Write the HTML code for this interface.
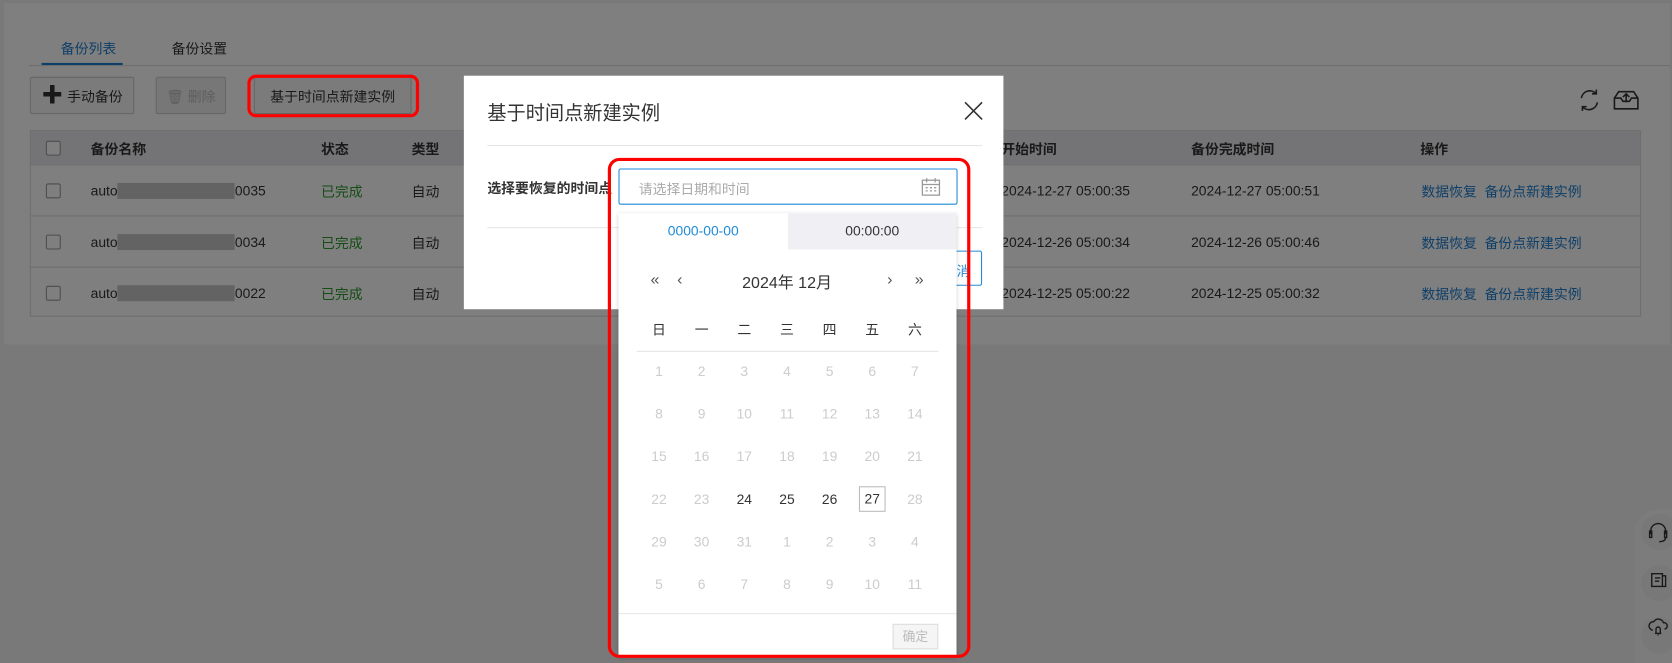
<!DOCTYPE html>
<html><head><meta charset="utf-8"><style>
*{box-sizing:border-box;margin:0;padding:0}
html,body{width:1672px;height:662px;overflow:hidden;background:#797979}
#w{position:absolute;left:0;top:0;width:1568px;height:622px;transform:scale(1.06633);transform-origin:0 0;font-family:"Liberation Sans","Noto Sans CJK SC",sans-serif;font-size:13px;color:#333;background:#f2f2f2;overflow:hidden}
.abs{position:absolute}
.card{left:4px;top:3px;width:1562px;height:320px;background:#fff}
.btn{position:absolute;top:72px;height:35px;border:1px solid #ccc;background:#f7f7f7;display:flex;align-items:center;justify-content:center;font-size:13px;border-radius:2px;white-space:nowrap}
.tbl{left:28px;top:122px;width:1511px;height:175px;border:1px solid #ddd}
.hd{position:absolute;left:0;top:0;width:100%;height:31px;background:#e8e8ec;font-weight:bold}
.row{position:absolute;left:0;width:100%;height:48px;border-top:1px solid #ddd}
.cell{position:absolute;top:50%;transform:translateY(-50%);white-space:nowrap}
.cb{position:absolute;left:14px;width:14px;height:14px;border:1px solid #999;background:#fff;border-radius:2px;top:50%;transform:translateY(-50%)}
.lnk{color:#1f7fd0}
.ov{left:0;top:0;width:1568px;height:622px;background:rgba(0,0,0,.5)}
.modal{left:435px;top:71px;width:506px;height:219px;background:#fff}
.dd{left:580px;top:200px;width:317px;height:416px;background:#fff;box-shadow:0 1px 4px rgba(0,0,0,.2)}
.d{position:absolute;width:40px;text-align:center;font-size:13px;color:#ccc;transform:translate(-50%,-50%)}
.blur{display:inline-block;width:110px;height:15px;background:#5f5f5f;opacity:.35;vertical-align:-3px}
.sc{position:absolute;left:6px;width:34px;height:34px;border-radius:50%;background:#f0f0f0}
</style></head><body><div id="w">
<div class="abs card"></div>
<div class="abs" style="left:57px;top:35px;font-size:13px;color:#1f7fd0">备份列表</div>
<div class="abs" style="left:161px;top:35px;font-size:13px">备份设置</div>
<div class="abs" style="left:27px;top:61px;width:1539px;height:1px;background:#ddd"></div>
<div class="abs" style="left:39px;top:59px;width:76px;height:2px;background:#1f7fd0"></div>
<div class="btn" style="left:28px;width:98px"><span style="font-size:20px;font-weight:bold;margin-right:4px;line-height:1">✚</span>手动备份</div>
<div class="btn" style="left:146px;width:66px;color:#bbb;background:#eee">🗑 删除</div>
<div class="btn" style="left:238px;width:148px">基于时间点新建实例</div>
<div class="abs tbl">
 <div class="hd"><div class="cb"></div>
  <div class="cell" style="left:56px">备份名称</div><div class="cell" style="left:272px">状态</div><div class="cell" style="left:357px">类型</div>
  <div class="cell" style="left:910px">开始时间</div><div class="cell" style="left:1088px">备份完成时间</div><div class="cell" style="left:1303px">操作</div>
 </div>
 <div class="row" style="top:31px"><div class="cb"></div><div class="cell" style="left:56px">auto<span class="blur"></span>0035</div><div class="cell" style="left:272px;color:#2a9a2a">已完成</div><div class="cell" style="left:357px">自动</div><div class="cell" style="left:910px">2024-12-27 05:00:35</div><div class="cell" style="left:1088px">2024-12-27 05:00:51</div><div class="cell lnk" style="left:1304px">数据恢复&nbsp; 备份点新建实例</div></div>
 <div class="row" style="top:79px"><div class="cb"></div><div class="cell" style="left:56px">auto<span class="blur"></span>0034</div><div class="cell" style="left:272px;color:#2a9a2a">已完成</div><div class="cell" style="left:357px">自动</div><div class="cell" style="left:910px">2024-12-26 05:00:34</div><div class="cell" style="left:1088px">2024-12-26 05:00:46</div><div class="cell lnk" style="left:1304px">数据恢复&nbsp; 备份点新建实例</div></div>
 <div class="row" style="top:127px"><div class="cb"></div><div class="cell" style="left:56px">auto<span class="blur"></span>0022</div><div class="cell" style="left:272px;color:#2a9a2a">已完成</div><div class="cell" style="left:357px">自动</div><div class="cell" style="left:910px">2024-12-25 05:00:22</div><div class="cell" style="left:1088px">2024-12-25 05:00:32</div><div class="cell lnk" style="left:1304px">数据恢复&nbsp; 备份点新建实例</div></div>
</div>
<svg class="abs" style="left:1478px;top:80px" width="70" height="28" viewBox="0 0 70 28" fill="none" stroke="#333" stroke-width="1.5"><path d="M5 12a8 8 0 0 1 14-4M20 16a8 8 0 0 1-14 4M19 4v4h-4M6 24v-4h4"/><path d="M36 12l4-6h14l4 6v10H36zM36 12h6l2 3h6l2-3h6M47 16V8M44 11l3-3 3 3"/></svg>
<div class="abs" style="left:1533px;top:478px;width:60px;height:160px;border-radius:22px;background:#f8f8f8">
 <div class="sc" style="top:4px"></div><div class="sc" style="top:52px"></div><div class="sc" style="top:101px"></div>
</div>
<svg class="abs" style="left:1544px;top:488px" width="22" height="125" viewBox="0 0 22 125" fill="none" stroke="#333" stroke-width="1.3"><path d="M4 13v-3a7 7 0 0 1 14 0v3M3 10h2v6H3zM17 10h2v6h-2zM18 16q0 4-6 4"/><path d="M5 50h10v12H5zM15 52h3v10h-3M8 54h5M8 57h4"/><path d="M6 103a4 4 0 0 1 1-8 5 5 0 0 1 9 1 3 3 0 0 1 1 6M9 106v-4a2 2 0 0 1 4 0v4h1H8M11 107v1"/></svg>
<div class="abs ov"></div>
<div class="abs" style="left:232px;top:70px;width:161px;height:40px;border:3px solid #f00;border-radius:8px"></div>
<div class="abs modal">
 <div class="abs" style="left:22px;top:21px;font-size:18px;color:#333">基于时间点新建实例</div>
 <svg class="abs" style="left:469px;top:24px" width="18" height="18" stroke="#333" stroke-width="1.5"><path d="M1 1l16 16M17 1L1 17"/></svg>
 <div class="abs" style="left:22px;top:65px;width:464px;height:1px;background:#e6e6e6"></div>
 <div class="abs" style="left:22px;top:95px;font-size:13px;font-weight:bold;color:#333">选择要恢复的时间点</div>
 <div class="abs" style="left:22px;top:142px;width:464px;height:1px;background:#e6e6e6"></div>
 <div class="abs" style="left:435px;top:164px;width:51px;height:33px;border:1px solid #1f8ad8;border-radius:2px;color:#1f8ad8;text-align:right;padding:8px 10px 0 0">取消</div>
</div>
<div class="abs" style="left:580px;top:158px;width:318px;height:34px;border:1px solid #1f8ad8;border-radius:2px;background:#fff">
 <div class="abs" style="left:18px;top:8px;color:#aaa;font-size:13px">请选择日期和时间</div>
 <svg class="abs" style="left:283px;top:7px" width="18" height="18" fill="none" stroke="#999" stroke-width="1.2"><rect x="1" y="3" width="16" height="14"/><path d="M1 7h16M5 1v4M13 1v4M4 10h2M8 10h2M12 10h2M4 13h2M8 13h2M12 13h2"/></svg>
</div>
<div class="abs dd">
 <div class="abs" style="left:0;top:0;width:159px;height:34px;text-align:center;line-height:34px;color:#1f8ad8">0000-00-00</div>
 <div class="abs" style="left:159px;top:0;width:158px;height:34px;background:#f0f0f4;text-align:center;line-height:34px">00:00:00</div>
 <div class="abs" style="left:30px;top:54px;color:#555;font-size:15px">«&nbsp;&nbsp;&nbsp;&nbsp;‹</div>
 <div class="abs" style="left:116px;top:54px;font-size:15px">2024年 12月</div>
 <div class="abs" style="left:252px;top:54px;color:#555;font-size:15px">›&nbsp;&nbsp;&nbsp;&nbsp;&nbsp;»</div>
 <div class="abs" style="left:17px;top:129px;width:283px;height:1px;background:#e6e6e6"></div>
 <div class="abs" style="left:0;top:375px;width:317px;height:1px;background:#e6e6e6"></div>
 <div class="abs" style="left:257px;top:385px;width:43px;height:24px;border:1px solid #ddd;background:#f5f5f5;color:#bbb;text-align:center;line-height:22px;font-size:12px">确定</div>
 <div id="cal"></div>
</div>
<div class="abs" style="left:570px;top:148px;width:340px;height:469px;border:3px solid #f00;border-radius:11px"></div>
</div>
<script>
var c=document.getElementById('cal'),h='';
var wd=['日','一','二','三','四','五','六'];
for(var i=0;i<7;i++)h+='<div class="d" style="left:'+(38+40*i)+'px;top:108px;color:#333">'+wd[i]+'</div>';
var days=[1,2,3,4,5,6,7,8,9,10,11,12,13,14,15,16,17,18,19,20,21,22,23,24,25,26,27,28,29,30,31,1,2,3,4,5,6,7,8,9,10,11];
for(var k=0;k<42;k++){var r=Math.floor(k/7),col=k%7,st='';
 if(k>=23&&k<=26)st='color:#333;';
 if(k==26)st+='border:1px solid #bbb;height:24px;width:25px;line-height:22px;';
 h+='<div class="d" style="left:'+(38+40*col)+'px;top:'+(148+40*r)+'px;'+st+'">'+days[k]+'</div>';}
c.innerHTML=h;
</script>
</body></html>
